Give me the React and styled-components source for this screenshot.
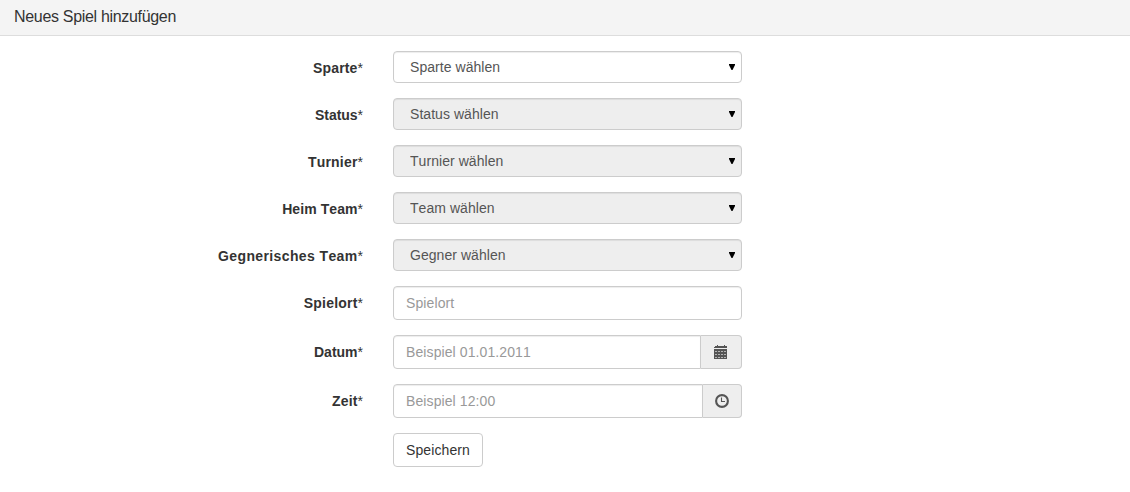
import React from 'react';
import styled, { createGlobalStyle } from 'styled-components';

const GlobalStyle = createGlobalStyle`
  *, *::before, *::after { box-sizing: border-box; }
  body {
    margin: 0;
    background: #fff;
    color: #333;
    font: 14px/20px "Liberation Sans", Arial, sans-serif;
    font-kerning: none;
  }
`;

const Header = styled.header`
  height: 36px;
  padding: 7px 14px 0;
  background: #f4f4f4;
  border-bottom: 1px solid #ddd;
`;

const Title = styled.h1`
  margin: 0;
  font-size: 16px;
  font-weight: 400;
  line-height: 20px;
  letter-spacing: -0.32px;
`;

const Form = styled.form`
  display: flex;
  flex-direction: column;
  gap: 15px;
  padding-top: 15px;
`;

const Row = styled.div`
  display: grid;
  grid-template-columns: 363px 349px;
  column-gap: 30px;
`;

const Label = styled.label`
  padding-top: 7px;
  text-align: right;
  white-space: nowrap;
`;

const LabelText = styled.b`
  letter-spacing: ${(p) => p.$spacing}px;
`;

const Group = styled.div`
  position: relative;
  display: flex;
  height: ${(p) => p.$height}px;
`;

const Select = styled.select`
  appearance: none;
  width: 100%;
  height: 32px;
  margin: 0;
  padding: 0 30px 1px 16px;
  border: 1px solid #ccc;
  border-radius: 4px;
  background: ${(p) => (p.disabled ? '#eee' : '#fff')};
  box-shadow: inset 0 1px 1px rgba(0, 0, 0, 0.075);
  color: #555;
  opacity: 1;
  font: inherit;
  font-kerning: none;
  letter-spacing: 0.05px;
`;

const Arrow = styled.svg`
  position: absolute;
  top: 13px;
  right: 7px;
  pointer-events: none;
`;

const Input = styled.input`
  flex: 1;
  min-width: 0;
  height: 34px;
  margin: 0;
  padding: 6px 12px;
  border: 1px solid #ccc;
  border-radius: ${(p) => (p.$joined ? '4px 0 0 4px' : '4px')};
  background: #fff;
  box-shadow: inset 0 1px 1px rgba(0, 0, 0, 0.075);
  color: #555;
  font: inherit;
  font-kerning: none;
  letter-spacing: 0.1px;
  &::placeholder { color: #999; opacity: 1; }
`;

const Addon = styled.span`
  display: flex;
  align-items: center;
  justify-content: center;
  width: ${(p) => p.$width}px;
  border: 1px solid #ccc;
  border-left: 0;
  border-radius: 0 4px 4px 0;
  background: #eee;
  color: #555;
`;

const Button = styled.button`
  grid-column: 2;
  justify-self: start;
  width: 90px;
  height: 34px;
  padding: 0;
  border: 1px solid #ccc;
  border-radius: 4px;
  background: #fff;
  color: #333;
  font: inherit;
  font-kerning: none;
  letter-spacing: 0.1px;
`;

const CalendarIcon = () => (
  <svg width="14" height="14" viewBox="0 0 14 14" fill="currentColor" shapeRendering="crispEdges">
    <path d="M1 1h2V0h1v1h6V0h1v1h2v2H0V2h1z" />
    <path d="M0 4h13v10H0z" />
    <path
      fill="#b4b4b4"
      d="M1 6h2v1H1zM4 6h2v1H4zM7 6h2v1H7zM10 6h2v1h-2zM1 9h2v1H1zM4 9h2v1H4zM7 9h2v1H7zM10 9h2v1h-2zM1 12h2v1H1zM4 12h2v1H4zM7 12h2v1H7zM10 12h2v1h-2z"
    />
  </svg>
);

const ClockIcon = () => (
  <svg width="14" height="14" viewBox="0 0 14 14" fill="none" stroke="currentColor">
    <circle cx="7" cy="7" r="5.9" strokeWidth="2.1" />
    <path d="M6.5 3.5v4H10" strokeWidth="1.1" />
  </svg>
);

const selects = [
  { id: 'sparte', label: 'Sparte', text: 'Sparte wählen', spacing: 0.15 },
  { id: 'status', label: 'Status', text: 'Status wählen', disabled: true, spacing: -0.05 },
  { id: 'turnier', label: 'Turnier', text: 'Turnier wählen', disabled: true, spacing: 0.2 },
  { id: 'heim', label: 'Heim Team', text: 'Team wählen', disabled: true, spacing: 0.08 },
  { id: 'gegner', label: 'Gegnerisches Team', text: 'Gegner wählen', disabled: true, spacing: 0.38 },
];

const inputs = [
  { id: 'ort', label: 'Spielort', text: 'Spielort', spacing: 0.2 },
  { id: 'datum', label: 'Datum', text: 'Beispiel 01.01.2011', Icon: CalendarIcon, width: 41, spacing: 0 },
  { id: 'zeit', label: 'Zeit', text: 'Beispiel 12:00', Icon: ClockIcon, width: 39, spacing: 0.15 },
];

const FieldLabel = ({ id, text, spacing }) => (
  <Label htmlFor={id}>
    <LabelText $spacing={spacing}>{text}</LabelText>*
  </Label>
);

export default function App() {
  return (
    <>
      <GlobalStyle />
      <Header>
        <Title>Neues Spiel hinzufügen</Title>
      </Header>
      <Form>
        {selects.map(({ id, label, text, disabled, spacing }) => (
          <Row key={id}>
            <FieldLabel id={id} text={label} spacing={spacing} />
            <Group $height={32}>
              <Select id={id} disabled={disabled}>
                <option>{text}</option>
              </Select>
              <Arrow width="6" height="6" viewBox="0 0 6 6">
                <path d="M0 0h6v1L3.5 6h-1L0 1z" fill="#000" />
              </Arrow>
            </Group>
          </Row>
        ))}
        {inputs.map(({ id, label, text, Icon, width, spacing }) => (
          <Row key={id}>
            <FieldLabel id={id} text={label} spacing={spacing} />
            <Group $height={34}>
              <Input id={id} placeholder={text} $joined={!!Icon} />
              {Icon && (
                <Addon $width={width}>
                  <Icon />
                </Addon>
              )}
            </Group>
          </Row>
        ))}
        <Row>
          <Button type="button">Speichern</Button>
        </Row>
      </Form>
    </>
  );
}
